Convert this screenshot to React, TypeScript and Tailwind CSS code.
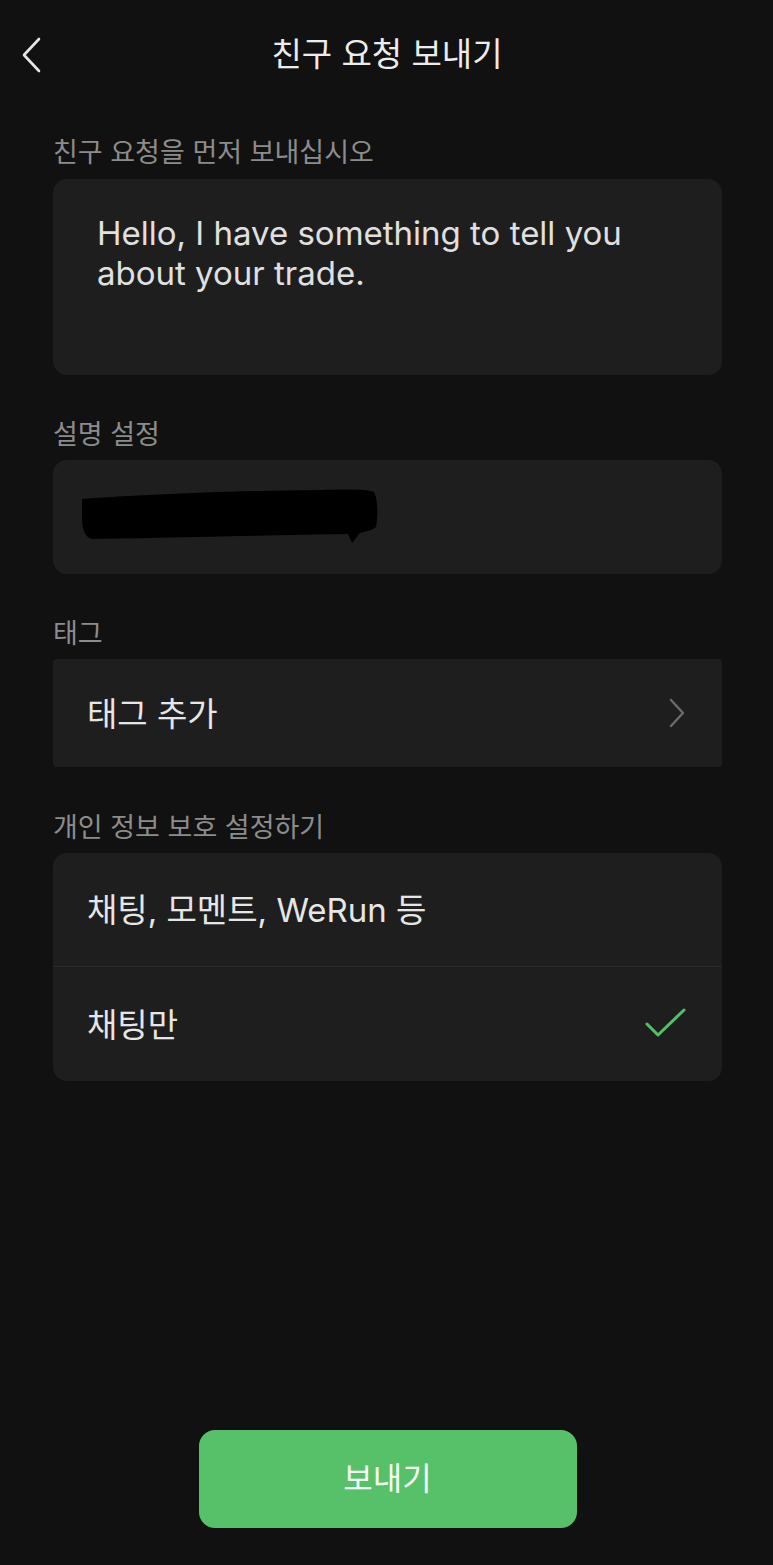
import React from "react";

const font = { fontFamily: 'Inter, "Noto Sans CJK KR", sans-serif' };

export default function App() {
  return (
    <div className="w-[773px] h-[1565px] bg-[#111111] flex flex-col text-[#e6e6e6]" style={font}>
      {/* Header */}
      <div className="relative h-[110px] flex items-center justify-center">
        <svg className="absolute left-[20px] top-[37px]" width="22" height="36" viewBox="0 0 22 36" fill="none">
          <path d="M19 2 L4 18 L19 34" stroke="#e6e6e6" strokeWidth="2.6" strokeLinecap="round" strokeLinejoin="round" />
        </svg>
        <div className="text-[33px] text-[#ececec] font-normal ml-[1px]">친구 요청 보내기</div>
      </div>

      <div className="pl-[53px] pr-[51px] flex flex-col">
        <div className="text-[27px] text-[#8c8c8c] mt-[24px] pt-[4px] leading-[30px]">친구 요청을 먼저 보내십시오</div>
        <div className="mt-[11px] h-[196px] rounded-[14px] bg-[#1e1e1e] pl-[44px] pr-[20px] pt-[34px]">
          <div className="text-[33px] leading-[40px] text-[#e0e0e0]">
            Hello, I have something to tell you
            <br />
            about your trade.
          </div>
        </div>

        <div className="text-[27px] text-[#8c8c8c] mt-[41px] pt-[4px] leading-[30px]">설명 설정</div>
        <div className="mt-[10px] h-[114px] rounded-[14px] bg-[#1e1e1e] flex items-center pl-[27px]">
          <svg width="300" height="60" viewBox="0 0 300 60">
            <path
              d="M2 12 C60 8 140 4 240 3 C265 2 290 2 294 5 C298 12 298 30 296 40 C292 44 286 44 280 46 L272 56 L268 47 C200 48 120 50 12 52 C4 50 2 40 2 30 Z"
              fill="#000000"
            />
          </svg>
        </div>

        <div className="text-[27px] text-[#8c8c8c] mt-[41px] pt-[4px] leading-[30px]">태그</div>
        <div className="mt-[10px] h-[108px] rounded-[4px] bg-[#1e1e1e] flex items-center justify-between pl-[34px] pr-[36px]">
          <span className="text-[33px] text-[#e6e6e6] pt-[3px]">태그 추가</span>
          <svg width="18" height="30" viewBox="0 0 18 30" fill="none">
            <path d="M3 2 L15 15 L3 28" stroke="#6b6b6b" strokeWidth="2.4" strokeLinecap="round" strokeLinejoin="round" />
          </svg>
        </div>

        <div className="text-[27px] text-[#8c8c8c] mt-[42px] pt-[4px] leading-[30px]">개인 정보 보호 설정하기</div>
        <div className="mt-[10px] rounded-[14px] bg-[#1e1e1e] flex flex-col">
          <div className="h-[114px] flex items-center pl-[34px] border-b border-[#2a2a2a]">
            <span className="text-[33px] text-[#e6e6e6] pt-[3px]">채팅, 모멘트, WeRun 등</span>
          </div>
          <div className="h-[114px] flex items-center justify-between pl-[34px] pr-[36px]">
            <span className="text-[33px] text-[#e6e6e6] pt-[4px]">채팅만</span>
            <svg width="42" height="30" viewBox="0 0 42 30" fill="none" className="-mt-[2px]">
              <path d="M3 16 L14 27 L40 2" stroke="#4fc267" strokeWidth="3" strokeLinecap="round" strokeLinejoin="round" />
            </svg>
          </div>
        </div>
      </div>

      <div className="flex-1" />
      <div className="flex justify-center pb-[37px] pl-[2px]">
        <div className="w-[378px] h-[98px] rounded-[16px] bg-[#57c16a] flex items-center justify-center">
          <span className="text-[32px] text-[#f4fff6]">보내기</span>
        </div>
      </div>
    </div>
  );
}
